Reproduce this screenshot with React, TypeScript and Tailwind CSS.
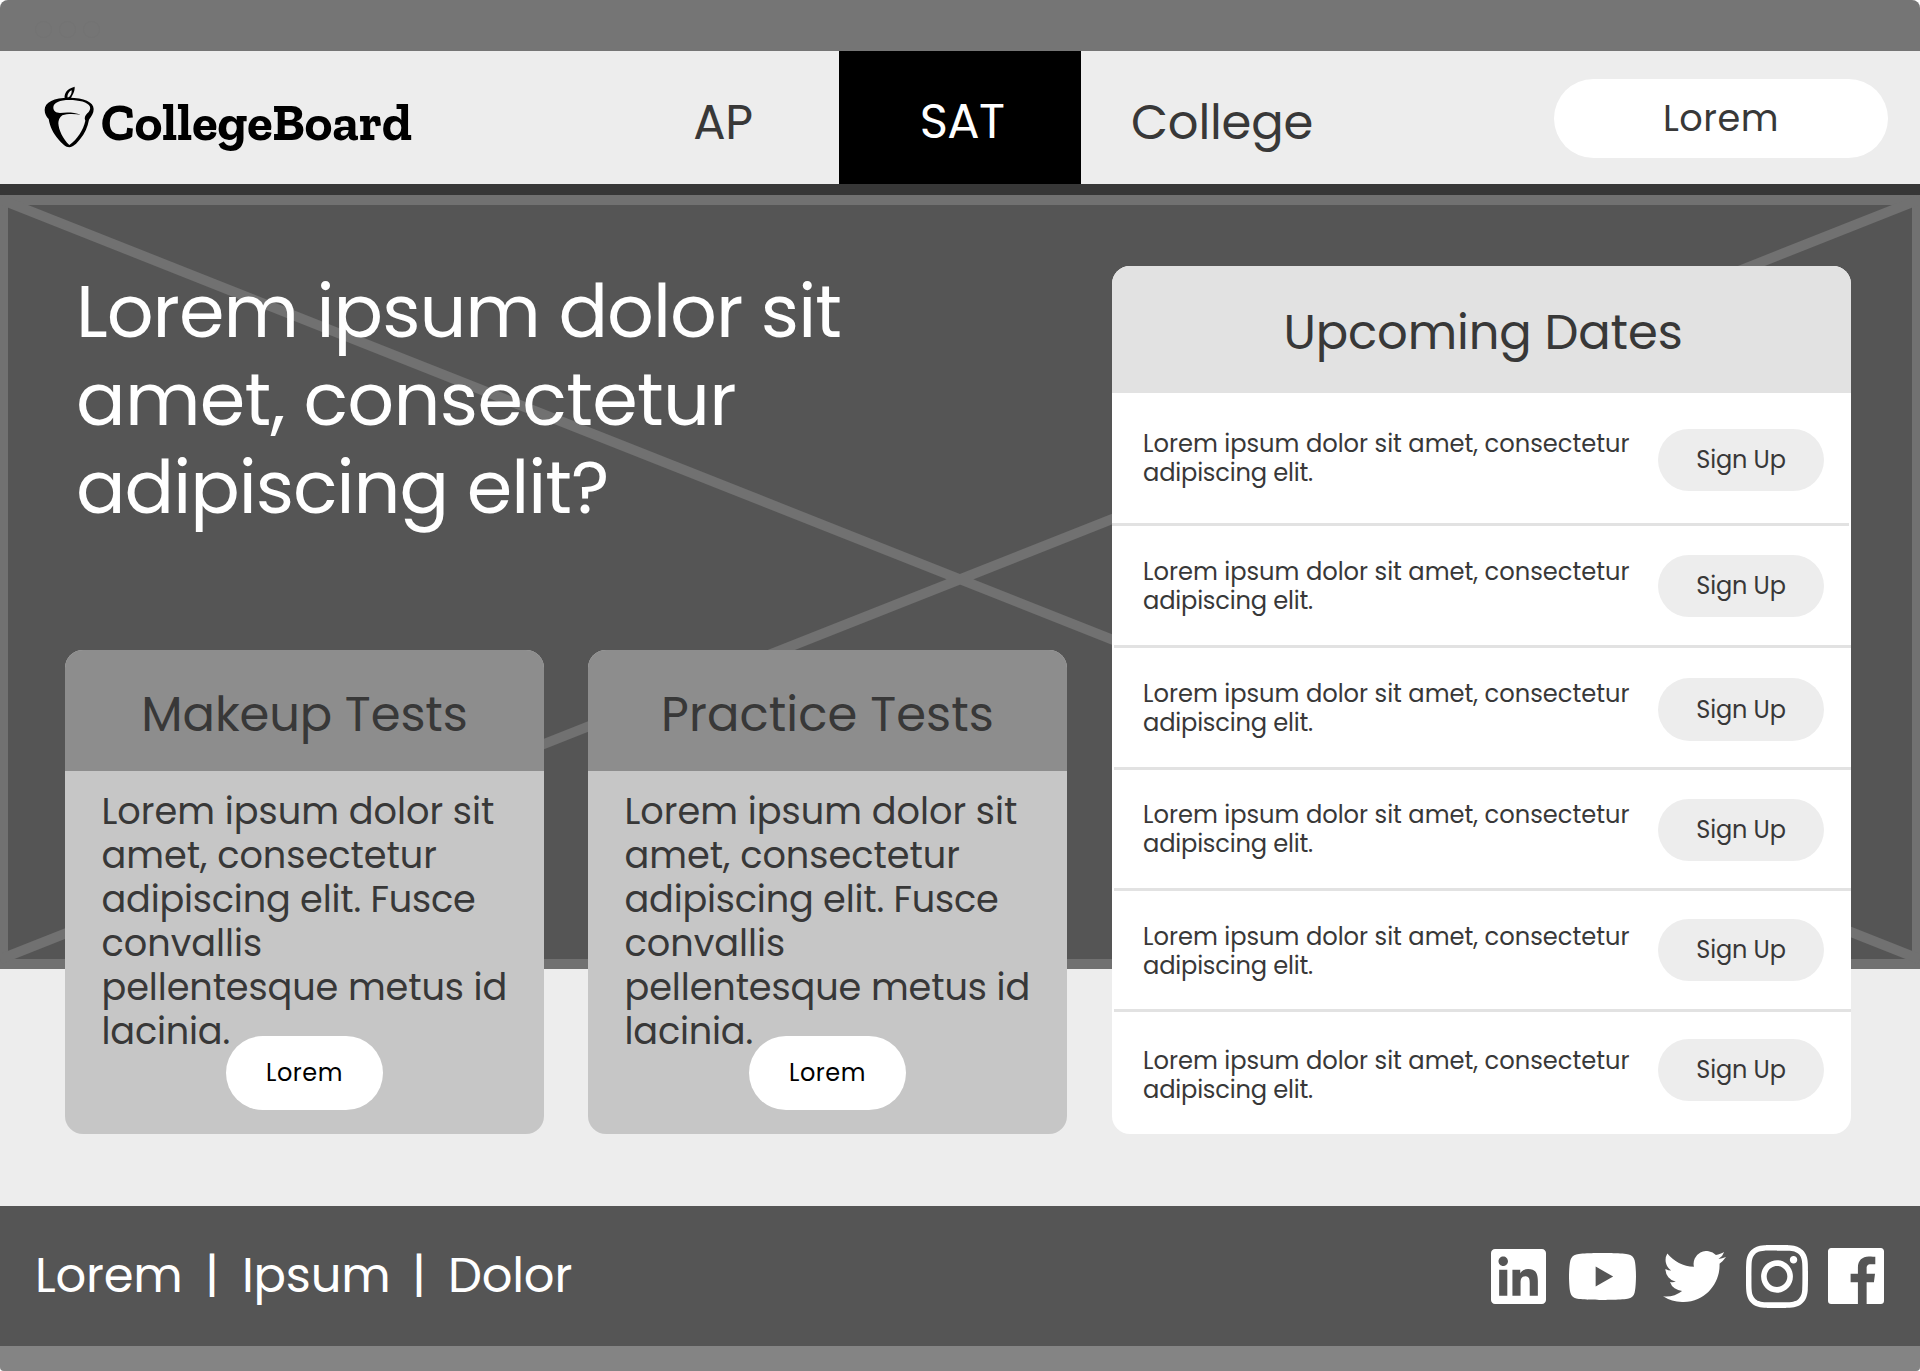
import type { ReactNode } from "react";

const UPCOMING = [
  { row: "h-[133px]", text: "mt-[36px]", button: "mt-[36px] h-[62px]", rule: "mr-[2px]" },
  { row: "h-[122px]", text: "mt-[31px]", button: "mt-[29px] h-[62px]", rule: "ml-[2px]" },
  { row: "h-[122px]", text: "mt-[31px]", button: "mt-[30px] h-[63px]", rule: "ml-[2px]" },
  { row: "h-[121px]", text: "mt-[30px]", button: "mt-[29px] h-[62px]", rule: "ml-[2px]" },
  { row: "h-[121px]", text: "mt-[31px]", button: "mt-[28px] h-[62px]", rule: "ml-[2px]" },
  { row: "h-[122px]", text: "mt-[34px]", button: "mt-[27px] h-[62px]", rule: "" },
];

function Acorn() {
  return (
    <svg className="h-[63px] w-[51px]" viewBox="40 18 153 189" fill="#000" fillRule="evenodd">
      <path d="M115 53C70 53 42 66 42 90c0 12 5 20 12 27 4 25 14 43 29 61 12 14 22 24 33 24s22-11 32-24c15-18 23-38 27-59 8-11 14-19 14-32 0-21-29-34-74-34Zm1 7c29 0 56 6 62 20 2 8-2 14-8 20-7 6-10 15-6 22-6 28-24 56-48 73-19-17-32-45-33-65 0-8 3-18 12-24 13-5 35-5 55-2-20-8-45-8-62-5-12 0-20-5-20-17 0-14 20-22 48-22Z" />
      <path d="M102 55c-2-14 6-29 30-35 1 16-8 26-11 35Zm9-2c8-1 13-14 12-22-9 4-14 14-12 22Z" />
    </svg>
  );
}

function Icon({ box, className, d }: { box: string; className: string; d: string }) {
  return (
    <svg viewBox={box} className={className} fill="#fff" preserveAspectRatio="none">
      <path d={d} />
    </svg>
  );
}

function TestCard({ title, titleClass }: { title: string; titleClass: string }) {
  return (
    <article className="h-[484px] w-[479px] overflow-hidden rounded-[18px] bg-[#c6c6c6]">
      <header className="flex h-[121px] items-center justify-center bg-[#8d8d8d] pt-[9px]">
        <h2 className={`text-[48px] leading-none whitespace-nowrap ${titleClass}`}>{title}</h2>
      </header>
      <p className="h-[265px] pt-[19px] pl-[36.5px] text-[36.67px] leading-[44px] whitespace-nowrap">
        Lorem ipsum dolor sit
        <br />
        amet, consectetur
        <br />
        <span className="tracking-[-0.2px]">adipiscing elit. Fusce</span>
        <br />
        convallis
        <br />
        <span className="tracking-[-0.1px]">pellentesque metus id</span>
        <br />
        <span className="tracking-[-0.2px]">lacinia.</span>
      </p>
      <button className="relative mx-auto block h-[74px] w-[157px] rounded-full bg-white text-[24px] tracking-[0.5px] text-black">
        Lorem
      </button>
    </article>
  );
}

function NavItem({ className, children }: { className: string; children: ReactNode }) {
  return (
    <a className={`flex h-full items-center justify-center text-[48px] leading-none whitespace-nowrap ${className}`}>
      {children}
    </a>
  );
}

export default function App() {
  return (
    <div className="bg-white">
      <div className="h-[1371px] w-[1920px] overflow-hidden rounded-t-[8px] rounded-b-[4px] bg-[#ededed] font-['Poppins','Inter',sans-serif] text-[#383838]">
        <div className="flex h-[51px] items-center justify-between bg-[#757575] pt-[7px] pr-[22px] pl-[35px]">
          <div className="flex gap-[7px]">
            <span className="size-[17px] rounded-full border border-[#737373]" />
            <span className="size-[17px] rounded-full border border-[#737373]" />
            <span className="size-[17px] rounded-full border border-[#737373]" />
          </div>
        </div>

        <header className="flex h-[133px] items-center bg-[#ededed]">
          <div className="flex w-[642px] items-start pl-[44px]">
            <div className="mt-[3px]">
              <Acorn />
            </div>
            <span className="mt-[9px] ml-[6px] font-['Zilla_Slab','DejaVu_Serif',serif] text-[52.5px] leading-[60px] font-bold text-black">
              CollegeBoard
            </span>
          </div>
          <NavItem className="w-[197px] pt-[10px] pr-[38px] pl-[3px] tracking-[-0.4px]">AP</NavItem>
          <NavItem className="w-[242px] bg-black pt-[8px] pl-[4px] tracking-[-0.7px] text-white">SAT</NavItem>
          <NavItem className="w-[281px] pt-[10px] pl-[1px] tracking-[-0.2px]">College</NavItem>
          <button className="mt-[2px] ml-[192px] h-[79px] w-[334px] rounded-full bg-white text-[36.67px] tracking-[0.5px]">
            Lorem
          </button>
        </header>
        <div className="h-[11px] bg-[#373737]" />

        <main className="relative h-[1011px]">
          <svg className="absolute top-0 left-0 h-[774px] w-[1920px]" viewBox="0 0 1920 774">
            <rect width="1920" height="774" fill="#717171" />
            <rect x="8" y="10" width="1904" height="754" fill="#555" />
            <path d="M0 4.2 1920 764.4M1920 4.2 0 764.4" stroke="#717171" strokeWidth="9.9" />
          </svg>

          <div className="relative flex">
            <section className="w-[1112px] pt-[73px] pl-[65px]">
              <h1 className="h-[382px] pl-[11px] text-[73.33px] leading-[88px] whitespace-nowrap text-white">
                <span className="tracking-[-1px]">Lorem ipsum dolor sit</span>
                <br />
                <span className="tracking-[-0.65px]">amet, consectetur</span>
                <br />
                <span className="tracking-[-1px]">adipiscing elit?</span>
              </h1>
              <div className="flex gap-[44px]">
                <TestCard title="Makeup Tests" titleClass="tracking-[-0.1px]" />
                <TestCard title="Practice Tests" titleClass="tracking-[0.1px]" />
              </div>
            </section>

            <section className="mt-[71px] h-[868px] w-[739px] overflow-hidden rounded-[18px] bg-white">
              <header className="flex h-[127px] items-center justify-center bg-[#e2e2e2] pt-[6px] pl-[3px]">
                <h2 className="text-[48px] leading-none tracking-[-0.1px]">Upcoming Dates</h2>
              </header>
              {UPCOMING.map((item, i) => (
                <div key={i} className={`flex flex-col justify-between ${item.row}`}>
                  <div className="flex items-start justify-between pr-[27px] pl-[31px]">
                    <p className={`text-[24.17px] leading-[29px] whitespace-nowrap ${item.text}`}>
                      Lorem ipsum dolor sit amet, consectetur
                      <br />
                      <span className="tracking-[-0.2px]">adipiscing elit.</span>
                    </p>
                    <button className={`w-[166px] rounded-full bg-[#ededed] text-[24px] tracking-[-0.1px] ${item.button}`}>
                      Sign Up
                    </button>
                  </div>
                  {item.rule && <div className={`h-[3px] bg-[#e2e2e2] ${item.rule}`} />}
                </div>
              ))}
            </section>
          </div>
        </main>

        <footer className="flex h-[140px] items-center justify-between bg-[#555] pr-[36px] pl-[35px]">
          <div className="flex text-[48px] leading-none tracking-[-0.2px] whitespace-nowrap text-white">
            <span className="w-[170px]">Lorem</span>
            <span className="w-[37px]">|</span>
            <span className="w-[170px]">Ipsum</span>
            <span className="w-[36px]">|</span>
            <span>Dolor</span>
          </div>
          <div className="flex items-center">
            <Icon
              box="0 0 24 24"
              className="mt-[1px] h-[55px] w-[55px]"
              d="M20.447 20.452h-3.554v-5.569c0-1.328-.027-3.037-1.852-3.037-1.853 0-2.136 1.445-2.136 2.939v5.667H9.351V9h3.414v1.561h.046c.477-.9 1.637-1.85 3.37-1.85 3.601 0 4.267 2.37 4.267 5.455v6.286zM5.337 7.433c-1.144 0-2.063-.926-2.063-2.065 0-1.138.92-2.063 2.063-2.063 1.14 0 2.064.925 2.064 2.063 0 1.139-.925 2.065-2.064 2.065zm1.782 13.019H3.555V9h3.564v11.452zM22.225 0H1.771C.792 0 0 .774 0 1.729v20.542C0 23.227.792 24 1.771 24h20.451C23.2 24 24 23.227 24 22.271V1.729C24 .774 23.2 0 22.222 0h.003z"
            />
            <Icon
              box="0 3.545 24 16.91"
              className="mt-[1px] ml-[23px] h-[47px] w-[67px]"
              d="M23.498 6.186a3.016 3.016 0 0 0-2.122-2.136C19.505 3.545 12 3.545 12 3.545s-7.505 0-9.377.505A3.017 3.017 0 0 0 .502 6.186C0 8.07 0 12 0 12s0 3.93.502 5.814a3.016 3.016 0 0 0 2.122 2.136c1.871.505 9.376.505 9.376.505s7.505 0 9.377-.505a3.015 3.015 0 0 0 2.122-2.136C24 15.93 24 12 24 12s0-3.93-.502-5.814zM9.545 15.568V8.432L15.818 12l-6.273 3.568z"
            />
            <Icon
              box="0 2.25 24 19.5"
              className="mt-[1px] ml-[27px] h-[51px] w-[63px]"
              d="M23.953 4.57a10 10 0 01-2.825.775 4.958 4.958 0 002.163-2.723c-.951.555-2.005.959-3.127 1.184a4.92 4.92 0 00-8.384 4.482C7.69 8.095 4.067 6.13 1.64 3.162a4.822 4.822 0 00-.666 2.475c0 1.71.87 3.213 2.188 4.096a4.904 4.904 0 01-2.228-.616v.06a4.923 4.923 0 003.946 4.827 4.996 4.996 0 01-2.212.085 4.936 4.936 0 004.604 3.417 9.867 9.867 0 01-6.102 2.105c-.39 0-.779-.023-1.17-.067a13.995 13.995 0 007.557 2.209c9.053 0 13.998-7.496 13.998-13.985 0-.21 0-.42-.015-.63A9.935 9.935 0 0024 4.59z"
            />
            <Icon
              box="0 0 24 24"
              className="ml-[20px] h-[63px] w-[62px]"
              d="M12 0C8.74 0 8.333.015 7.053.072 5.775.132 4.905.333 4.14.63c-.789.306-1.459.717-2.126 1.384S.935 3.35.63 4.14C.333 4.905.131 5.775.072 7.053.012 8.333 0 8.74 0 12s.015 3.667.072 4.947c.06 1.277.261 2.148.558 2.913.306.788.717 1.459 1.384 2.126.667.666 1.336 1.079 2.126 1.384.766.296 1.636.499 2.913.558C8.333 23.988 8.74 24 12 24s3.667-.015 4.947-.072c1.277-.06 2.148-.262 2.913-.558.788-.306 1.459-.718 2.126-1.384.666-.667 1.079-1.335 1.384-2.126.296-.765.499-1.636.558-2.913.06-1.28.072-1.687.072-4.947s-.015-3.667-.072-4.947c-.06-1.277-.262-2.149-.558-2.913-.306-.789-.718-1.459-1.384-2.126C21.319 1.347 20.651.935 19.86.63c-.765-.297-1.636-.499-2.913-.558C15.667.012 15.26 0 12 0zm0 2.16c3.203 0 3.585.016 4.85.071 1.17.055 1.805.249 2.227.415.562.217.96.477 1.382.896.419.42.679.819.896 1.381.164.422.36 1.057.413 2.227.057 1.266.07 1.646.07 4.85s-.015 3.585-.074 4.85c-.061 1.17-.256 1.805-.421 2.227-.224.562-.479.96-.899 1.382-.419.419-.824.679-1.38.896-.42.164-1.065.36-2.235.413-1.274.057-1.649.07-4.859.07-3.211 0-3.586-.015-4.859-.074-1.171-.061-1.816-.256-2.236-.421-.569-.224-.96-.479-1.379-.899-.421-.419-.69-.824-.9-1.38-.165-.42-.359-1.065-.42-2.235-.045-1.26-.061-1.649-.061-4.844 0-3.196.016-3.586.061-4.861.061-1.17.255-1.814.42-2.234.21-.57.479-.96.9-1.381.419-.419.81-.689 1.379-.898.42-.166 1.051-.361 2.221-.421 1.275-.045 1.65-.06 4.859-.06l.045.03zm0 3.678c-3.405 0-6.162 2.76-6.162 6.162 0 3.405 2.76 6.162 6.162 6.162 3.405 0 6.162-2.76 6.162-6.162 0-3.405-2.76-6.162-6.162-6.162zM12 16c-2.21 0-4-1.79-4-4s1.79-4 4-4 4 1.79 4 4-1.79 4-4 4zm7.846-10.405c0 .795-.646 1.44-1.44 1.44-.795 0-1.44-.646-1.44-1.44 0-.794.646-1.439 1.44-1.439.793-.001 1.44.645 1.44 1.439z"
            />
            <Icon
              box="0 0 24 24"
              className="ml-[20px] h-[56px] w-[56px]"
              d="M22.676 0H1.324C.593 0 0 .593 0 1.324v21.352C0 23.408.593 24 1.324 24h11.494v-9.294H9.689v-3.621h3.129V8.41c0-3.099 1.894-4.785 4.659-4.785 1.325 0 2.464.097 2.796.141v3.24h-1.921c-1.5 0-1.792.721-1.792 1.771v2.311h3.584l-.465 3.63H16.56V24h6.115c.733 0 1.325-.592 1.325-1.324V1.324C24 .593 23.408 0 22.676 0"
            />
          </div>
        </footer>
        <div className="h-[25px] bg-[#848484]" />
      </div>
    </div>
  );
}
